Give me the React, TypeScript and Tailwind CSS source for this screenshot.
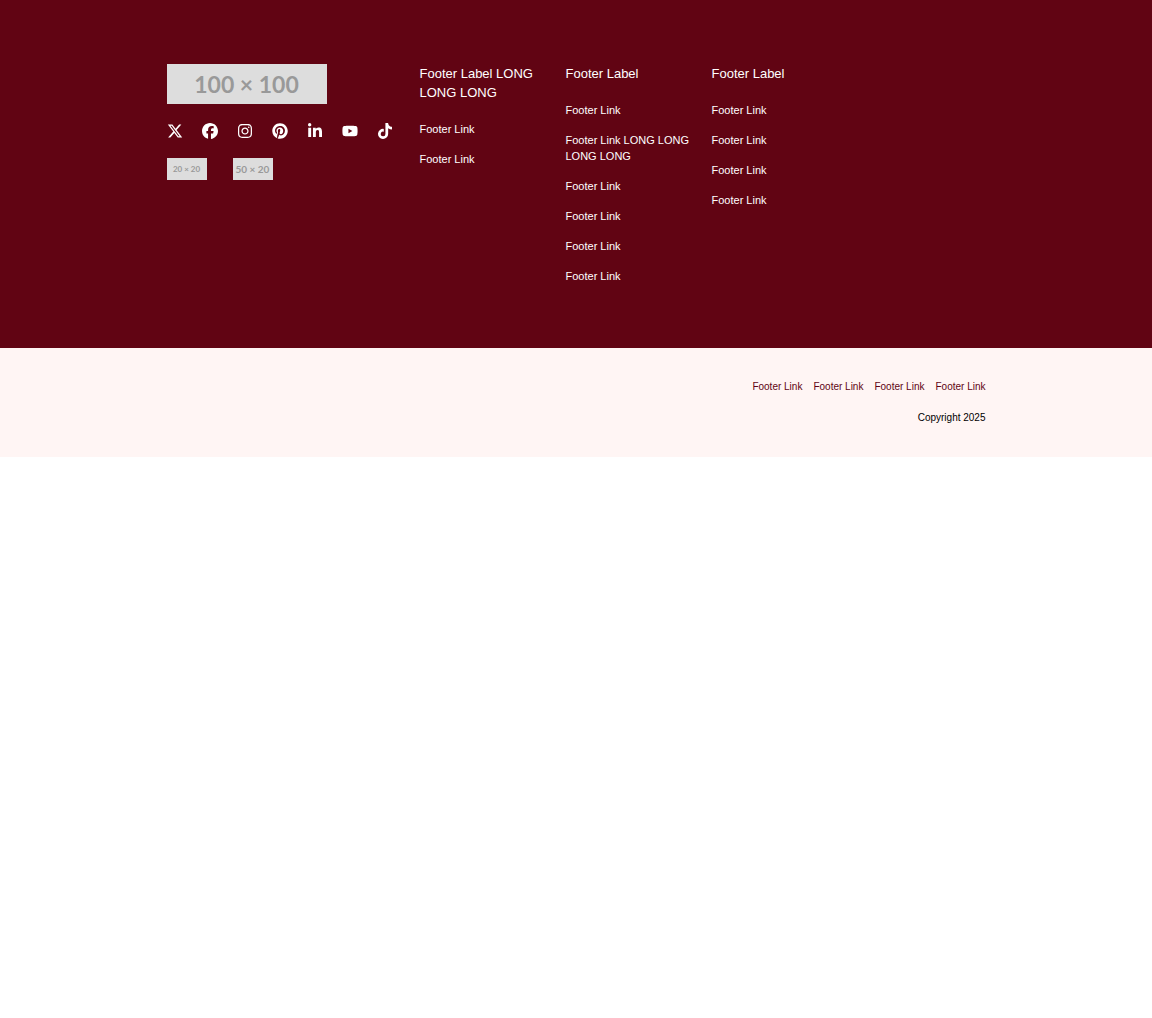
import React from "react";
import { FaXTwitter, FaFacebook, FaInstagram, FaPinterest, FaLinkedinIn, FaYoutube, FaTiktok } from "react-icons/fa6";

const social = [
  { name: "X", Icon: FaXTwitter },
  { name: "Facebook", Icon: FaFacebook },
  { name: "Instagram", Icon: FaInstagram },
  { name: "Pinterest", Icon: FaPinterest },
  { name: "LinkedIn", Icon: FaLinkedinIn },
  { name: "YouTube", Icon: FaYoutube },
  { name: "TikTok", Icon: FaTiktok },
];

const columns = [
  { label: "Footer Label LONG LONG LONG", links: ["Footer Link", "Footer Link"] },
  {
    label: "Footer Label",
    links: ["Footer Link", "Footer Link LONG LONG LONG LONG", "Footer Link", "Footer Link", "Footer Link", "Footer Link"],
  },
  { label: "Footer Label", links: ["Footer Link", "Footer Link", "Footer Link", "Footer Link"] },
];

const legal = ["Footer Link", "Footer Link", "Footer Link", "Footer Link"];

export default function App() {
  return (
    <footer className="font-['Liberation_Sans',Arial,sans-serif] text-black">
      <div className="bg-[#610413] text-white">
        <div className="mx-auto flex max-w-[819px] py-16">
          <div className="w-[253px] shrink-0">
            <div className="flex h-10 w-40 items-center justify-center bg-[#dddddd] font-['Lato',sans-serif] text-[23px] font-bold text-[#999999]">
              100 × 100
            </div>
            <ul className="mt-[19px] flex gap-[19px]">
              {social.map(({ name, Icon }) => (
                <li key={name}>
                  <a href="#" aria-label={name} className="block">
                    <Icon className="size-4" />
                  </a>
                </li>
              ))}
            </ul>
            <div className="mt-[19px] flex items-center gap-[26px] font-['Lato',sans-serif] text-[#999999]">
              <div className="flex h-[22px] w-10 items-center justify-center bg-[#dddddd] text-[8px] font-bold">20 × 20</div>
              <div className="flex h-[22px] w-10 items-center justify-center bg-[#dddddd] text-[10px] font-bold">50 × 20</div>
            </div>
          </div>
          <nav className="grid flex-1 grid-cols-[repeat(3,126px)] gap-5">
            {columns.map((column, i) => (
              <div key={i}>
                <h2 className="text-[13px] leading-[19px]">{column.label}</h2>
                <ul className="mt-[19px] flex flex-col gap-[14px] text-[11px] leading-4">
                  {column.links.map((link, j) => (
                    <li key={j}>
                      <a href="#">{link}</a>
                    </li>
                  ))}
                </ul>
              </div>
            ))}
          </nav>
        </div>
      </div>
      <div className="bg-[#fff5f4]">
        <div className="mx-auto flex max-w-[819px] flex-col items-end gap-[17px] py-8 text-[10px] leading-[14px]">
          <ul className="flex gap-[11px] text-[#610413]">
            {legal.map((link, i) => (
              <li key={i}>
                <a href="#">{link}</a>
              </li>
            ))}
          </ul>
          <p>Copyright 2025</p>
        </div>
      </div>
    </footer>
  );
}
